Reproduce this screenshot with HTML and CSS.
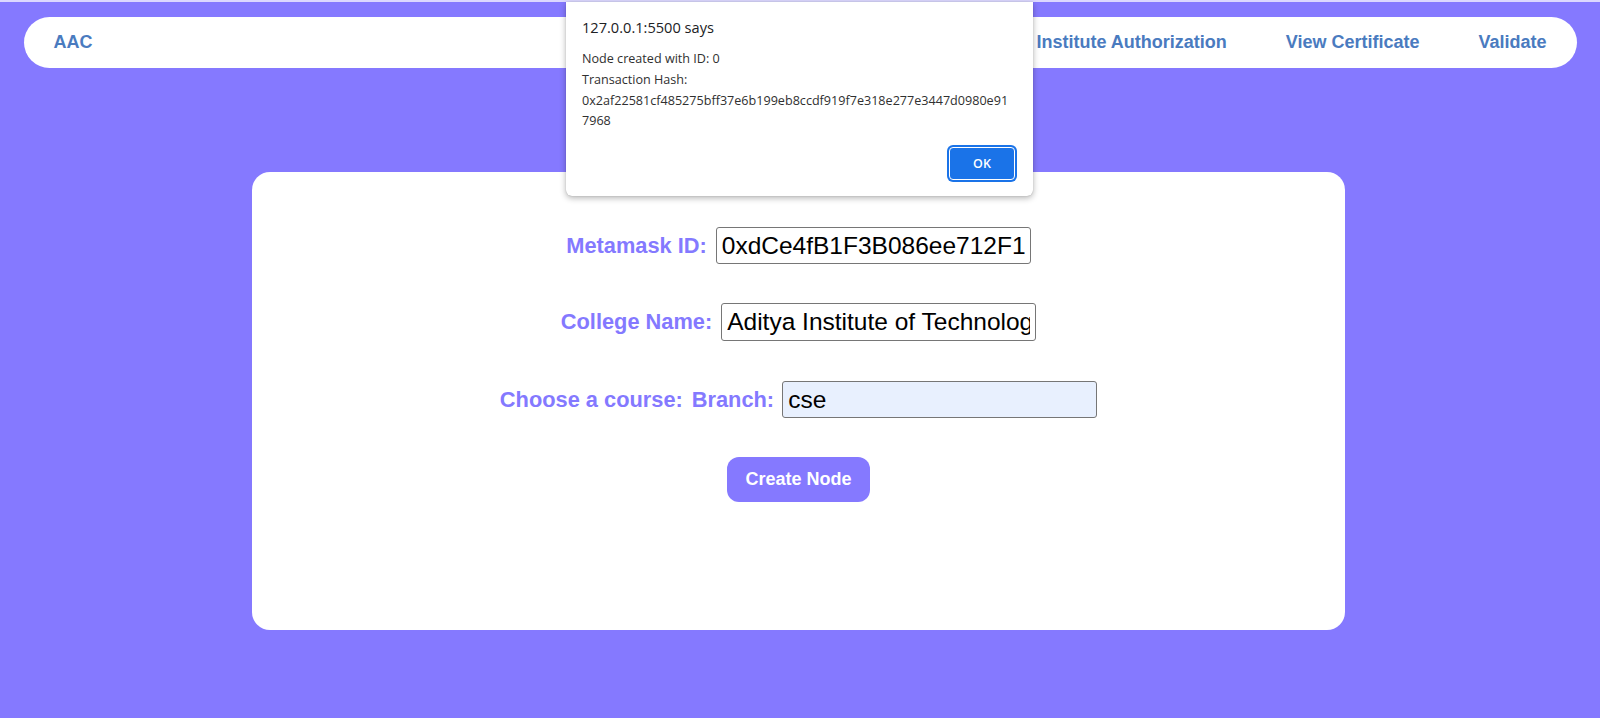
FILE: index.html
```html
<!DOCTYPE html>
<html lang="en">
<head>
<meta charset="utf-8">
<title>AAC - Create Node</title>
<link rel="stylesheet" href="styles.css">
</head>
<body>
<div class="page">
  <nav class="navbar">
    <div class="brand">AAC</div>
    <div class="links">
      <a class="link" href="#">Institute Authorization</a>
      <a class="link" href="#">View Certificate</a>
      <a class="link" href="#">Validate</a>
    </div>
  </nav>

  <main class="card">
    <form class="form">
      <div class="row">
        <label class="label">Metamask ID:</label>
        <input class="field" type="text" value="0xdCe4fB1F3B086ee712F1a9">
      </div>
      <div class="row">
        <label class="label">College Name:</label>
        <input class="field field-tall" type="text" value="Aditya Institute of Technology">
      </div>
      <div class="row row-course">
        <label class="label label-course">Choose a course:</label>
        <label class="label">Branch:</label>
        <input class="field autofill" type="text" value="cse">
      </div>
      <button class="btn" type="button">Create Node</button>
    </form>
  </main>

  <div class="dialog">
    <div class="dialog-title">127.0.0.1:5500 says</div>
    <div class="dialog-body">
      <div>Node created with ID: 0</div>
      <div>Transaction Hash:</div>
      <div>0x2af22581cf485275bff37e6b199eb8ccdf919f7e318e277e3447d0980e91</div>
      <div>7968</div>
    </div>
    <div class="dialog-actions">
      <button class="ok" type="button">OK</button>
    </div>
  </div>
</div>
</body>
</html>
```

FILE: styles.css
```css
* { box-sizing: border-box; }

html, body {
  margin: 0;
  padding: 0;
}

body {
  background: #8579ff;
  font-family: "Liberation Sans", Arial, sans-serif;
  width: 1600px;
  height: 718px;
  overflow: hidden;
}

.page {
  position: relative;
  height: 718px;
  border-top: 2px solid #dcd8ff;
  padding-top: 15px;
}

.navbar {
  margin-left: 23.5px;
  width: 1553px;
  height: 51px;
  background: #ffffff;
  border-radius: 26px;
  display: flex;
  align-items: center;
  justify-content: space-between;
  padding: 0 30px;
}

.brand,
.link {
  color: #4a7bbf;
  font-weight: bold;
  font-size: 18px;
  text-decoration: none;
}

.links {
  display: flex;
  gap: 59px;
}

.card {
  margin-top: 104px;
  margin-left: 252px;
  width: 1093px;
  height: 458px;
  background: #ffffff;
  border-radius: 18px;
  padding-top: 55px;
}

.form {
  display: flex;
  flex-direction: column;
  align-items: center;
  gap: 38.5px;
}

.row {
  display: flex;
  align-items: center;
  gap: 9px;
}

.row-course {
  margin-top: 2px;
  gap: 8px;
}

.label-course {
  margin-right: 1px;
}

.label {
  color: #8479ff;
  font-weight: bold;
  font-size: 21.8px;
}

.field {
  width: 315px;
  height: 37px;
  border: 1px solid #767676;
  border-radius: 3px;
  padding: 2px 5px;
  font-family: "Liberation Sans", Arial, sans-serif;
  font-size: 24.5px;
  color: #000;
  background: #fff;
  outline: none;
}

.field-tall {
  height: 38px;
}

.autofill {
  background: #e8f0fe;
}

.btn {
  width: 143px;
  height: 45px;
  border: none;
  border-radius: 12px;
  background: #8579ff;
  color: #fff;
  font-family: "Liberation Sans", Arial, sans-serif;
  font-weight: bold;
  font-size: 18px;
}

.dialog {
  position: absolute;
  left: 566px;
  top: 0;
  width: 467px;
  height: 194px;
  background: #fff;
  border-radius: 0 0 6px 6px;
  box-shadow: 0 2px 6px rgba(0, 0, 0, 0.3), 0 0 1px rgba(0, 0, 0, 0.3);
  font-family: "Open Sans", "Noto Sans", sans-serif;
  color: #202124;
  padding: 15px 17px 0 16px;
}

.dialog-title {
  font-size: 14.6px;
  line-height: 20px;
}

.dialog-body {
  margin-top: 12px;
  font-size: 12.6px;
  line-height: 20.8px;
  color: #303030;
}

.dialog-actions {
  display: flex;
  justify-content: flex-end;
  margin-top: 15px;
  padding-right: 1px;
}

.ok {
  width: 66px;
  height: 33px;
  border-radius: 4px;
  border: 1px solid #ffffff;
  box-shadow: 0 0 0 2px #1a73e8;
  background: #1a73e8;
  color: #fff;
  font-family: "Open Sans", "Noto Sans", sans-serif;
  font-weight: 600;
  font-size: 12.5px;
}
```
